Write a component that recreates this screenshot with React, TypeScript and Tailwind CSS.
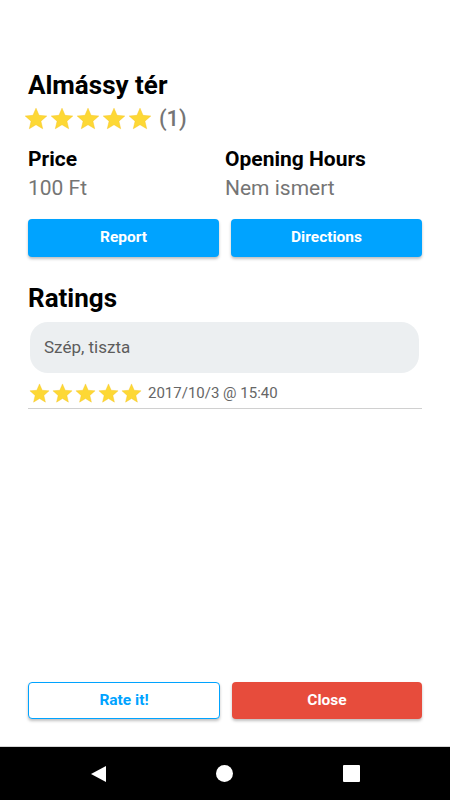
import React from "react";

const STAR = "M12 17.27L18.18 21l-1.64-7.03L22 9.24l-7.19-.61L12 2 9.19 8.63 2 9.24l5.46 4.73L5.82 21z";

function Stars({ size, count = 5 }: { size: number; count?: number }) {
    return (
        <div className="flex">
            {Array.from({ length: count }).map((_, i) => (
                <svg key={i} width={size} height={size} viewBox="0 0 24 24">
                    <path d={STAR} fill="#fdd835" stroke="#f5c320" strokeWidth="0.4" />
                </svg>
            ))}
        </div>
    );
}

export default function App() {
    return (
        <div
            className="h-[800px] w-full flex flex-col bg-white"
            style={{ fontFamily: "Roboto, 'Noto Sans', sans-serif" }}
        >
            {/* Details */}
            <div className="flex-1 px-[28px] pt-[70px]">
                <h1 className="text-[26px] leading-[30px] font-bold text-black">Almássy tér</h1>

                <div className="flex items-center h-[26px] mt-[6px] -ml-[5px]">
                    <Stars size={26} />
                    <span className="ml-[6px] text-[22px] leading-[26px] font-medium text-[#757575]">(1)</span>
                </div>

                <div className="grid grid-cols-2 mt-[15px]">
                    <div>
                        <div className="text-[21px] leading-[24px] font-bold text-black">Price</div>
                        <div className="mt-[5px] text-[21px] leading-[24px] text-[#757575]">100 Ft</div>
                    </div>
                    <div>
                        <div className="text-[21px] leading-[24px] font-bold text-black">Opening Hours</div>
                        <div className="mt-[5px] text-[21px] leading-[24px] text-[#757575]">Nem ismert</div>
                    </div>
                </div>

                <div className="flex gap-[12px] mt-[19px]">
                    <button className="flex-1 h-[38px] rounded-[4px] bg-[#00a3ff] text-white text-[15.5px] font-bold shadow-[0_2px_3px_rgba(0,0,0,0.25)]">
                        Report
                    </button>
                    <button className="flex-1 h-[38px] rounded-[4px] bg-[#00a3ff] text-white text-[15.5px] font-bold shadow-[0_2px_3px_rgba(0,0,0,0.25)]">
                        Directions
                    </button>
                </div>

                <h2 className="mt-[26px] text-[26px] leading-[30px] font-bold text-black">Ratings</h2>

                {/* Rating item */}
                <div className="mt-[9px] ml-[2px] mr-[3px] h-[51px] rounded-[18px] bg-[#eceff1] flex items-center px-[14px]">
                    <span className="text-[17px] text-[#5c5c5c]">Szép, tiszta</span>
                </div>
                <div className="mt-[9px] flex items-center pb-[3px] border-b border-[#d0d0d0]">
                    <Stars size={23} />
                    <span className="ml-[5px] text-[15px] leading-[23px] text-[#666666]">2017/10/3 @ 15:40</span>
                </div>
            </div>

            {/* Bottom actions */}
            <div className="flex gap-[12px] px-[28px] mb-[27px]">
                <button className="flex-1 h-[37px] rounded-[4px] bg-white border border-[#00a3ff] text-[#00a3ff] text-[15.5px] font-bold shadow-[0_2px_3px_rgba(0,0,0,0.25)]">
                    Rate it!
                </button>
                <button className="flex-1 h-[37px] rounded-[4px] bg-[#e74c3c] text-white text-[15.5px] font-bold shadow-[0_2px_3px_rgba(0,0,0,0.25)]">
                    Close
                </button>
            </div>

            {/* Android nav bar */}
            <div className="h-px bg-[#d6d6d6]" />
            <div className="h-[53px] bg-black flex items-center justify-center gap-[110px]">
                <svg width="15" height="16" viewBox="0 0 15 16">
                    <path d="M15 0 L15 16 L0 8 Z" fill="white" />
                </svg>
                <div className="w-[17px] h-[17px] rounded-full bg-white" />
                <div className="w-[17px] h-[17px] bg-white rounded-[1px]" />
            </div>
        </div>
    );
}
